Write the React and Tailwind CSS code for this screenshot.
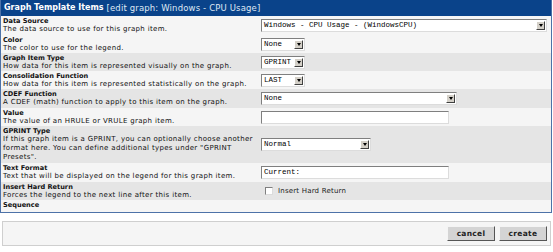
import React from 'react'

const ROWS = [
  { label: 'Data Source', desc: ['The data source to use for this graph item.'], h: 'h-[19px]', bg: 'bg-[#f5f5f5]', field: { type: 'select', value: 'Windows - CPU Usage - (WindowsCPU)', w: 'w-[286px]' } },
  { label: 'Color', desc: ['The color to use for the legend.'], h: 'h-[18px]', bg: 'bg-[#f5f5f5]', field: { type: 'select', value: 'None', w: 'w-[44px]' } },
  { label: 'Graph Item Type', desc: ['How data for this item is represented visually on the graph.'], h: 'h-[18px]', bg: 'bg-[#e5e5e5]', field: { type: 'select', value: 'GPRINT', w: 'w-[44px]' } },
  { label: 'Consolidation Function', desc: ['How data for this item is represented statistically on the graph.'], h: 'h-[18px]', bg: 'bg-[#f5f5f5]', field: { type: 'select', value: 'LAST', w: 'w-[44px]' } },
  { label: 'CDEF Function', desc: ['A CDEF (math) function to apply to this item on the graph.'], h: 'h-[19px]', bg: 'bg-[#e5e5e5]', field: { type: 'select', value: 'None', w: 'w-[196px]' } },
  { label: 'Value', desc: ['The value of an HRULE or VRULE graph item.'], h: 'h-[18px]', bg: 'bg-[#f5f5f5]', field: { type: 'text', value: '', w: 'w-[188px]' } },
  {
    label: 'GPRINT Type',
    desc: [
      'If this graph item is a GPRINT, you can optionally choose another',
      'format here. You can define additional types under "GPRINT',
      'Presets".',
    ],
    h: 'h-[37px]',
    bg: 'bg-[#e5e5e5]',
    field: { type: 'select', value: 'Normal', w: 'w-[110px]' },
  },
  { label: 'Text Format', desc: ['Text that will be displayed on the legend for this graph item.'], h: 'h-[19px]', bg: 'bg-[#f5f5f5]', field: { type: 'text', value: 'Current:', w: 'w-[188px]' } },
  { label: 'Insert Hard Return', desc: ['Forces the legend to the next line after this item.'], h: 'h-[18px]', bg: 'bg-[#e5e5e5]', field: { type: 'check', value: 'Insert Hard Return' } },
  { label: 'Sequence', desc: [], h: 'h-[12px]', bg: 'bg-[#f5f5f5]', field: null },
]

function Select({ value, w }) {
  return (
    <div className={`flex items-center h-[13px] ${w} bg-white border border-t-[#7f7f7f] border-l-[#7f7f7f] border-r-[#dcdcdc] border-b-[#dcdcdc]`}>
      <span className="flex-1 pl-[2px] text-[7.5px] leading-[11px] text-black font-['Liberation_Mono',monospace] whitespace-pre">{value}</span>
      <span className="flex items-center justify-center w-[9px] h-[9px] mr-[1px] bg-[#d4d0c8] border border-t-white border-l-white border-r-[#404040] border-b-[#404040]">
        <span className="w-0 h-0 border-l-[2.5px] border-r-[2.5px] border-t-[3px] border-l-transparent border-r-transparent border-t-black" />
      </span>
    </div>
  )
}

function TextInput({ value, w }) {
  return (
    <div className={`h-[13px] ${w} bg-white border border-t-[#7f7f7f] border-l-[#7f7f7f] border-r-[#dcdcdc] border-b-[#dcdcdc] pl-[2px] text-[7.5px] leading-[11px] font-['Liberation_Mono',monospace] text-black`}>
      {value}
    </div>
  )
}

function Field({ field }) {
  if (!field) return null
  if (field.type === 'select') return <Select value={field.value} w={field.w} />
  if (field.type === 'text') return <TextInput value={field.value} w={field.w} />
  return (
    <div className="flex items-center gap-[5px] pl-[4px]">
      <span className="w-[8px] h-[8px] bg-white border border-t-[#7f7f7f] border-l-[#7f7f7f] border-r-[#dcdcdc] border-b-[#dcdcdc]" />
      <span className="text-[7px] tracking-[0.2px] text-[#222]">{field.value}</span>
    </div>
  )
}

export default function App() {
  return (
    <div className="w-[553px] h-[252px] bg-white font-['DejaVu_Sans',Verdana,sans-serif] overflow-hidden">
      {/* Graph template items table */}
      <div className="w-[552px] border border-t-0 border-[#4d72a8]">
        <div className="h-[16px] bg-[#0a438a] flex items-center pl-[3px] text-white text-[8px] whitespace-nowrap">
          <span className="font-bold">Graph Template Items</span>
          <span className="ml-[3px] text-[8.5px] tracking-[0.15px] text-[#dfe8f4]">[edit graph: Windows - CPU Usage]</span>
        </div>
        {ROWS.map((r) => (
          <div key={r.label} className={`flex ${r.h} ${r.bg}`}>
            <div className="w-[260px] pl-[2px] pt-[1px] text-[#111]">
              <div className="text-[6.6px] font-bold leading-[8px]">{r.label}</div>
              {r.desc.map((d) => (
                <div key={d} className="text-[7px] tracking-[0.33px] leading-[9px] whitespace-nowrap">{d}</div>
              ))}
            </div>
            <div className="flex-1 flex items-center">
              <Field field={r.field} />
            </div>
          </div>
        ))}
      </div>

      {/* Buttons */}
      <div className="mt-[8px] ml-[2px] w-[549px] h-[25px] border border-[#cfcfcf] bg-[#f5f5f5] flex items-center justify-end gap-[4px] pr-[3px]">
        <button className="h-[15px] w-[48px] bg-[#d4d4d4] border border-t-[#f4f4f4] border-l-[#f4f4f4] border-r-[#555] border-b-[#555] text-[7.5px] font-bold tracking-[0.3px] text-[#222]">cancel</button>
        <button className="h-[15px] w-[48px] bg-[#d4d4d4] border border-t-[#f4f4f4] border-l-[#f4f4f4] border-r-[#555] border-b-[#555] text-[7.5px] font-bold tracking-[0.3px] text-[#222]">create</button>
      </div>
    </div>
  )
}
